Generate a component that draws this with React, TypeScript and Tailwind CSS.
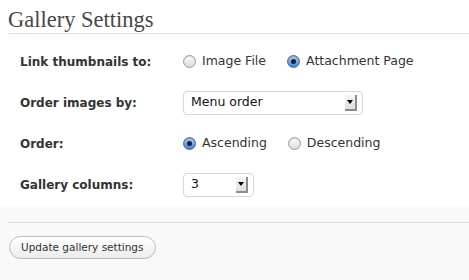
import React from "react";

function Radio({ checked }: { checked?: boolean }) {
  if (checked) {
    return (
      <span className="flex h-[13px] w-[13px] shrink-0 items-center justify-center rounded-full border border-[#44679e] bg-linear-to-b from-[#b5d3f5] to-[#3f7fd4] shadow-[inset_0_1px_1px_rgba(0,0,0,0.25)]">
        <span className="h-[5px] w-[5px] rounded-full bg-[#14203a]" />
      </span>
    );
  }
  return (
    <span className="h-[13px] w-[13px] shrink-0 rounded-full border border-[#9a9a9a] bg-linear-to-b from-[#ffffff] to-[#dadada] shadow-[inset_0_1px_1px_rgba(0,0,0,0.15)]" />
  );
}

function Select({ value, width }: { value: string; width: string }) {
  return (
    <div
      className={`flex h-[24px] items-center justify-between rounded-[4px] border border-[#d6d6d6] bg-white pl-[7px] pr-[5px] ${width}`}
    >
      <span className="text-[12.5px] text-[#111]">{value}</span>
      <span className="flex h-[16px] w-[12px] items-center justify-center border-r-2 border-b-2 border-[#8d8d8d] bg-linear-to-b from-[#f7f7f7] to-[#dedede]">
        <span className="h-0 w-0 border-x-[3px] border-t-[4px] border-x-transparent border-t-black" />
      </span>
    </div>
  );
}

function Row({ label, children }: { label: string; children: React.ReactNode }) {
  return (
    <div className="flex h-[41px] items-center">
      <div className="w-[163px] shrink-0 text-[12px] font-bold text-[#333]">{label}</div>
      <div className="flex items-center">{children}</div>
    </div>
  );
}

function RadioOpt({ checked, text, last }: { checked?: boolean; text: string; last?: boolean }) {
  return (
    <span className={`flex items-center gap-[6px] ${last ? "" : "mr-[21px]"}`}>
      <Radio checked={checked} />
      <span className="text-[12.5px] text-[#333]">{text}</span>
    </span>
  );
}

export default function App() {
  return (
    <div className="h-[280px] w-[469px] overflow-hidden bg-white font-['DejaVu_Sans',sans-serif]">
      <div className="ml-2 border-b border-[#dfdfdf] pt-[9px] pb-[2px]">
        <h3 className="font-['Liberation_Serif',serif] text-[22.5px] leading-[22px] text-[#464646]">
          Gallery Settings
        </h3>
      </div>
      <div className="pt-[7px] pb-[1px] pl-[20px]">
        <Row label="Link thumbnails to:">
          <RadioOpt text="Image File" />
          <RadioOpt checked text="Attachment Page" last />
        </Row>
        <Row label="Order images by:">
          <Select value="Menu order" width="w-[180px]" />
        </Row>
        <Row label="Order:">
          <RadioOpt checked text="Ascending" />
          <RadioOpt text="Descending" last />
        </Row>
        <Row label="Gallery columns:">
          <Select value="3" width="w-[71px]" />
        </Row>
      </div>
      <div className="h-[74px] bg-[#f9f9f9] pt-[16px]">
        <div className="ml-2 border-t border-[#dfdfdf]" />
        <div className="ml-[9px] mt-[13px] flex">
          <button className="flex h-[23px] items-center rounded-full border border-[#bbb] bg-linear-to-b from-[#ffffff] to-[#ececec] px-[11px] text-[10.5px] text-[#333]">
            Update gallery settings
          </button>
        </div>
      </div>
    </div>
  );
}
